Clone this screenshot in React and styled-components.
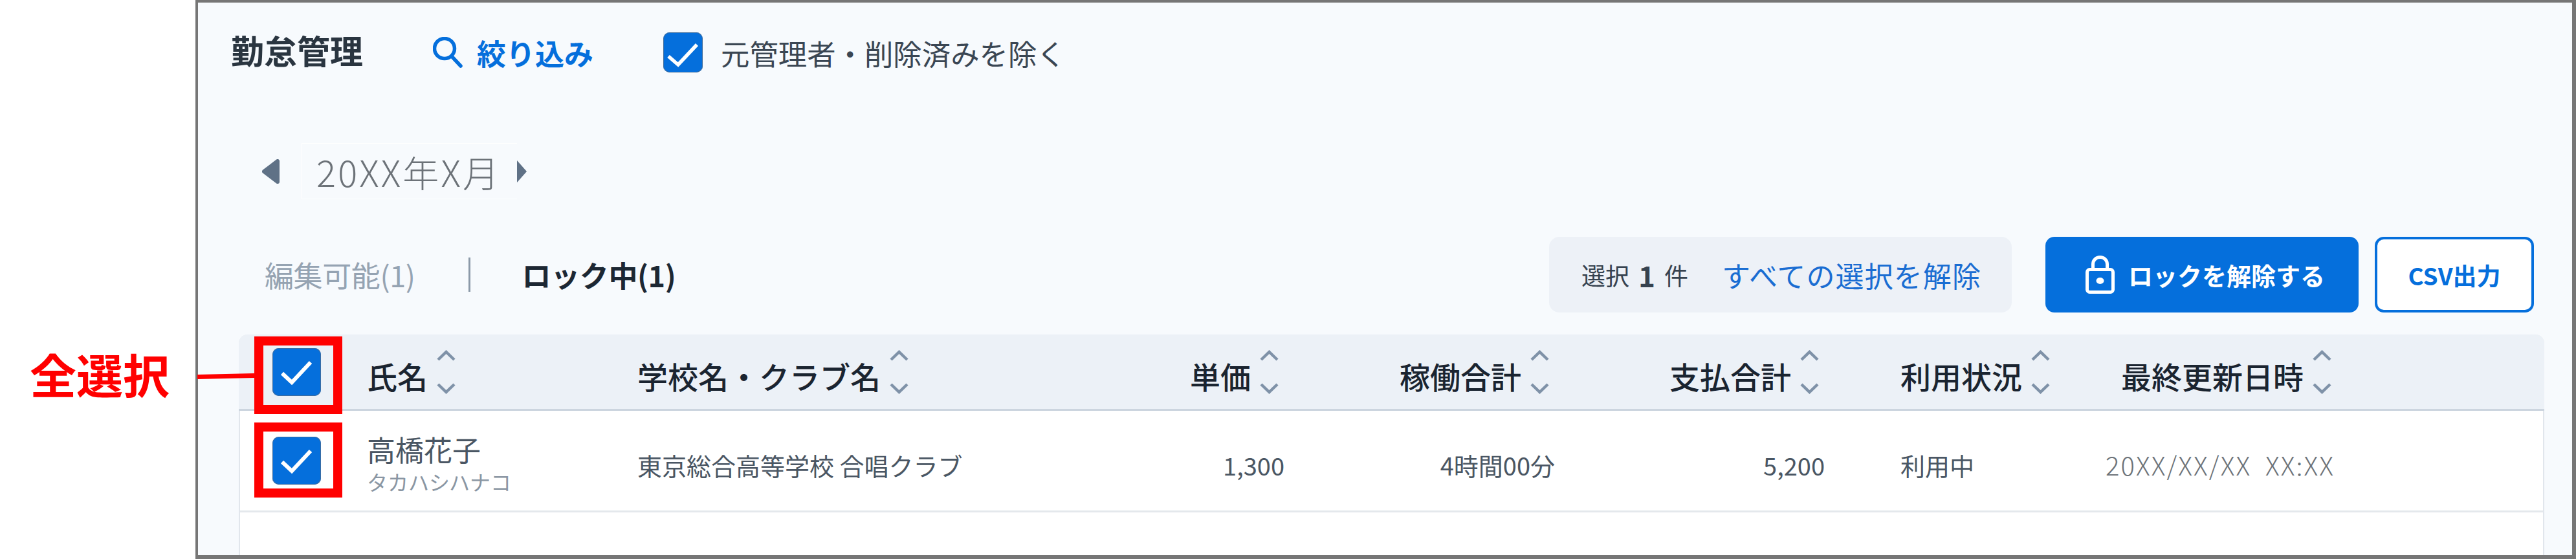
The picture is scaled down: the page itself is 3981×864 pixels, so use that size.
import React from "react";
import styled, { createGlobalStyle } from "styled-components";

const Global = createGlobalStyle`
  html, body { margin: 0; padding: 0; background: #fff; }
  * { box-sizing: border-box; }
  body { font-family: "Noto Sans CJK JP", "Noto Sans", sans-serif; }
`;

const Page = styled.div`
  display: flex;
  width: 3981px;
  height: 864px;
  overflow: hidden;
`;
const Gutter = styled.div`
  width: 302px;
  flex: none;
  padding: 535px 0 0 46px;
`;
const AllLabel = styled.div`
  font-size: 72px;
  line-height: 84px;
  font-weight: 700;
  color: #ff0000;
  white-space: nowrap;
`;
const Frame = styled.div`
  flex: 1;
  display: flex;
  flex-direction: column;
  border: solid #767676;
  border-width: 4px 6px 6px 4px;
  background: #f7fafd;
  padding: 0 43px 0 51px;
  min-width: 0;
`;
const Toolbar = styled.div`
  display: flex;
  align-items: center;
  height: 154px;
  flex: none;
`;
const Title = styled.div`
  font-size: 51px;
  font-weight: 700;
  color: #2a3540;
  width: 312px;
  margin-top: -8px;
`;
const FilterLink = styled.div`
  display: flex;
  align-items: center;
  gap: 22px;
  width: 356px;
  color: #056fdc;
  font-size: 45px;
  font-weight: 700;
`;
const Check = styled.span`
  position: relative;
  display: block;
  flex: none;
  width: ${p => p.$w || 75}px;
  height: ${p => p.$h || 74}px;
  border-radius: 10px;
  background: #056fdc;
  box-shadow: inset 0 0 0 1px #3f6d9e;
  svg { display: block; width: 100%; height: 100%; }
`;
const ExcludeLabel = styled.div`
  margin-left: 28px;
  font-size: 44.4px;
  color: #3a4653;
`;
const MonthRow = styled.div`
  display: flex;
  align-items: center;
  height: 87px;
  margin-top: 63px;
  padding-left: 48px;
  flex: none;
`;
const MonthBox = styled.div`
  width: 333px;
  height: 87px;
  margin-left: 33px;
  padding-left: 22px;
  display: flex;
  align-items: center;
  border: solid #fff;
  border-width: 1px 0 1px 1px;
  font-size: 56px;
  letter-spacing: 3.2px;
  font-weight: 300;
  color: #6c7278;
  white-space: nowrap;
`;
const TabsRow = styled.div`
  display: flex;
  align-items: center;
  height: 117px;
  margin-top: 58px;
  padding: 0 16px 0 52px;
  flex: none;
`;
const Tab = styled.div`
  font-size: 45px;
  letter-spacing: -0.4px;
  font-weight: ${p => (p.$active ? 700 : 400)};
  color: ${p => (p.$active ? "#1c2733" : "#95a3b2")};
  white-space: nowrap;
`;
const TabDivider = styled.div`
  width: 3px;
  height: 53px;
  background: #8b99a8;
  margin: 0 80px 0 82px;
`;
const Actions = styled.div`
  margin-left: auto;
  display: flex;
  align-items: stretch;
  height: 117px;
`;
const Selection = styled.div`
  width: 715px;
  border-radius: 16px;
  background: #edf1f7;
  display: flex;
  align-items: center;
  padding-left: 50px;
  color: #36424f;
  white-space: nowrap;
`;
const SelectionText = styled.span`
  font-size: 37px;
`;
const SelectionCount = styled.b`
  font-size: 44px;
  margin: 0 14px;
  font-weight: 700;
`;
const ClearLink = styled.span`
  font-size: 44px;
  letter-spacing: 1.1px;
  color: #1a6dd2;
  margin-left: 52px;
`;
const PrimaryButton = styled.div`
  width: 484px;
  margin-left: 52px;
  border-radius: 14px;
  background: #056fdc;
  color: #fff;
  display: flex;
  align-items: center;
  padding-left: 62px;
  gap: 21px;
  font-size: 38px;
  font-weight: 700;
  white-space: nowrap;
`;
const OutlineButton = styled.div`
  width: 246px;
  margin-left: 25px;
  border-radius: 14px;
  border: 4px solid #056fdc;
  background: #fff;
  color: #056fdc;
  display: flex;
  align-items: center;
  justify-content: center;
  font-size: 37px;
  font-weight: 700;
  white-space: nowrap;
`;
const Table = styled.div`
  flex: 1;
  margin: 34px 0 0 12px;
  background: #fff;
  border: solid #e1e6ec;
  border-width: 0 2px;
  border-radius: 14px 14px 0 0;
`;
const columns = "196px 418px 805px 195px 418px 417px 434px 1fr";
const HeadRow = styled.div`
  display: grid;
  grid-template-columns: ${columns};
  align-items: center;
  height: 118px;
  background: #ecf1f7;
  border-bottom: 3px solid #ccd5df;
  border-radius: 14px 14px 0 0;
  margin: 0 -2px;
  padding-left: 2px;
`;
const BodyRow = styled.div`
  display: grid;
  grid-template-columns: ${columns};
  align-items: center;
  height: 157px;
  border-bottom: 3px solid #e4e8ec;
`;
const CheckCell = styled.div`
  padding-left: 50px;
`;
const HeadCell = styled.div`
  display: flex;
  align-items: center;
  gap: 14px;
  justify-content: ${p => (p.$right ? "flex-end" : "flex-start")};
  padding-left: ${p => p.$pl || 0}px;
  padding-right: ${p => (p.$right ? 9 : 0)}px;
  font-size: 47px;
  font-weight: 500;
  color: #1a2430;
  white-space: nowrap;
`;
const HeadText = styled.span`
  display: block;
  margin-top: 12px;
`;
const NameStack = styled.div`
  display: flex;
  flex-direction: column;
  margin-top: 8px;
`;
const NameMain = styled.div`
  font-size: 44px;
  line-height: 56px;
  color: #4a5663;
`;
const NameKana = styled.div`
  font-size: 32px;
  line-height: 44px;
  color: #8a96a3;
`;
const BodyCell = styled.div`
  font-size: ${p => (p.$light ? 40 : 38)}px;
  margin-top: 12px;
  padding-left: ${p => p.$pl || 0}px;
  letter-spacing: ${p => (p.$light ? 2.1 : 0)}px;
  text-align: ${p => (p.$right ? "right" : "left")};
  font-weight: ${p => (p.$light ? 300 : 400)};
  color: ${p => (p.$light ? "#6c7278" : "#4a5663")};
  white-space: nowrap;
`;
const RedBox = styled.span`
  position: absolute;
  left: -28px;
  right: -33px;
  top: ${p => -p.$top}px;
  bottom: ${p => -p.$bottom}px;
  border: 14px solid #ff0000;
`;
const Leader = styled.span`
  position: absolute;
  left: -102px;
  top: 44px;
  width: 88px;
  height: 7px;
  background: #ff0000;
  transform: rotate(-1.3deg);
`;

const CheckGlyph = () => (
  <svg viewBox="0 0 75 74" fill="none">
    <path d="M15 39 L30 53 L59 22" stroke="#fff" strokeWidth="6" />
  </svg>
);

const SmallCheckGlyph = () => (
  <svg viewBox="0 0 61 62" fill="none">
    <path d="M8 37 L23 50 L52 19" stroke="#fff" strokeWidth="5.5" />
  </svg>
);

const SortIcon = () => (
  <svg width="29" height="68" viewBox="0 0 29 68" fill="none" stroke="#7f92a8" strokeWidth="4.5">
    <path d="M2 15 L14.5 3 L27 15" />
    <path d="M2 53 L14.5 65 L27 53" />
  </svg>
);

const SearchIcon = () => (
  <svg width="46" height="48" viewBox="0 0 46 48" fill="none" stroke="#056fdc" strokeWidth="5.5">
    <circle cx="18" cy="18" r="15.5" />
    <path d="M29 30 L43 45" strokeLinecap="round" />
  </svg>
);

const LockIcon = () => (
  <svg width="45" height="59" viewBox="0 0 45 59" fill="none" stroke="#fff" strokeWidth="5">
    <rect x="2.5" y="21.5" width="40" height="35" rx="4" />
    <path d="M11.5 21 V13 A11 10.5 0 0 1 33.5 13 V21" />
    <ellipse cx="22.5" cy="39" rx="6" ry="5" fill="#fff" stroke="none" />
  </svg>
);

const ArrowLeft = () => (
  <svg width="28" height="38" viewBox="0 0 28 38">
    <path
      d="M3 19 L24 3 V35 Z"
      fill="#5f7186"
      stroke="#5f7186"
      strokeWidth="6"
      strokeLinejoin="round"
    />
  </svg>
);
const ArrowRight = () => (
  <svg width="15" height="34" viewBox="0 0 15 34">
    <path d="M15 17 L0 0 V34 Z" fill="#5f7186" />
  </svg>
);

const headers = [
  { label: "氏名" },
  { label: "学校名・クラブ名" },
  { label: "単価", right: true },
  { label: "稼働合計", right: true },
  { label: "支払合計", right: true },
  { label: "利用状況", pl: 117 },
  { label: "最終更新日時", pl: 24 },
];

export default function App() {
  return (
    <Page>
      <Global />
      <Gutter>
        <AllLabel>全選択</AllLabel>
      </Gutter>
      <Frame>
        <Toolbar>
          <Title>勤怠管理</Title>
          <FilterLink>
            <SearchIcon />
            絞り込み
          </FilterLink>
          <Check $w={61} $h={62}>
            <SmallCheckGlyph />
          </Check>
          <ExcludeLabel>元管理者・削除済みを除く</ExcludeLabel>
        </Toolbar>
        <MonthRow>
          <ArrowLeft />
          <MonthBox>20XX年X月</MonthBox>
          <ArrowRight />
        </MonthRow>
        <TabsRow>
          <Tab>編集可能(1)</Tab>
          <TabDivider />
          <Tab $active>ロック中(1)</Tab>
          <Actions>
            <Selection>
              <SelectionText>選択</SelectionText>
              <SelectionCount>1</SelectionCount>
              <SelectionText>件</SelectionText>
              <ClearLink>すべての選択を解除</ClearLink>
            </Selection>
            <PrimaryButton>
              <LockIcon />
              ロックを解除する
            </PrimaryButton>
            <OutlineButton>CSV出力</OutlineButton>
          </Actions>
        </TabsRow>
        <Table>
          <HeadRow>
            <CheckCell>
              <Check>
                <CheckGlyph />
                <RedBox $top={18} $bottom={28}>
                  <Leader />
                </RedBox>
              </Check>
            </CheckCell>
            {headers.map(h => (
              <HeadCell key={h.label} $right={h.right} $pl={h.pl}>
                <HeadText>{h.label}</HeadText>
                <SortIcon />
              </HeadCell>
            ))}
          </HeadRow>
          <BodyRow>
            <CheckCell>
              <Check>
                <CheckGlyph />
                <RedBox $top={22} $bottom={20} />
              </Check>
            </CheckCell>
            <NameStack>
              <NameMain>高橋花子</NameMain>
              <NameKana>タカハシハナコ</NameKana>
            </NameStack>
            <BodyCell>東京総合高等学校 合唱クラブ</BodyCell>
            <BodyCell $right>1,300</BodyCell>
            <BodyCell $right>4時間00分</BodyCell>
            <BodyCell $right>5,200</BodyCell>
            <BodyCell $pl={117}>利用中</BodyCell>
            <BodyCell $light>{"20XX/XX/XX\u00a0\u00a0XX:XX"}</BodyCell>
          </BodyRow>
        </Table>
      </Frame>
    </Page>
  );
}
